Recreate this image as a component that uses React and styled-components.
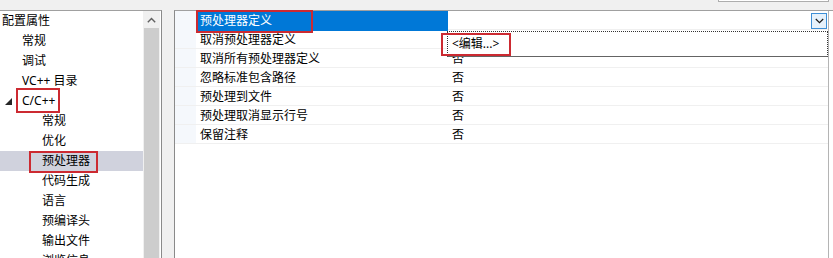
import React from "react";
import styled, { createGlobalStyle } from "styled-components";

const GlobalStyle = createGlobalStyle`
  html, body { margin: 0; padding: 0; }
  body {
    background: #f0f0f0;
    font-family: "Noto Sans", "Noto Sans CJK SC", sans-serif;
    font-size: 12px;
    color: #000;
  }
  * { box-sizing: border-box; }
`;

const Page = styled.div`
  width: 833px;
  height: 258px;
  overflow: hidden;
  display: flex;
  flex-direction: column;
  background: #f0f0f0;
`;

const TopStrip = styled.div`
  height: 10px;
  flex: none;
  display: flex;
  justify-content: flex-end;
  align-items: flex-start;
`;

const SearchBox = styled.div`
  width: 111px;
  height: 2px;
  margin-right: 4px;
  background: #fff;
  border: 1px solid #adadad;
  border-top: none;
`;

const Main = styled.div`
  flex: 1;
  display: flex;
  gap: 12px;
  min-height: 0;
`;

const TreePanel = styled.div`
  width: 162px;
  flex: none;
  display: flex;
  border-top: 1px solid #a0a0a0;
  border-right: 1px solid #8a8a8a;
  background: #fff;
`;

const TreeList = styled.div`
  width: 143px;
  flex: none;
  display: flex;
  flex-direction: column;
`;

const TreeRow = styled.div`
  height: 20px;
  flex: none;
  display: flex;
  align-items: center;
  padding-left: ${(p) => 2 + p.$level * 20}px;
  background: ${(p) => (p.$selected ? "#d0d2dd" : "transparent")};
  white-space: nowrap;
`;

const Expander = styled.span`
  width: 0;
  height: 0;
  margin-left: -17px;
  margin-right: 10px;
  border-style: solid;
  border-width: 0 0 7px 7px;
  border-color: transparent transparent #262626 transparent;
`;

const Label = styled.span`
  position: relative;
  line-height: 20px;
`;

const Callout = styled.span`
  position: absolute;
  top: ${(p) => p.$t}px;
  bottom: ${(p) => p.$b}px;
  left: ${(p) => p.$l}px;
  right: ${(p) => p.$r}px;
  border: 2px solid #cc2a31;
  pointer-events: none;
`;

const Scrollbar = styled.div`
  width: 17px;
  flex: none;
  margin-right: 1px;
  background: #f0f0f0;
  display: flex;
  flex-direction: column;
`;

const ScrollArrow = styled.div`
  height: 17px;
  flex: none;
  display: flex;
  align-items: center;
  justify-content: center;
`;

const ScrollThumb = styled.div`
  flex: 1;
  margin: 0 1px;
  background: #cdcdcd;
`;

const RightPanel = styled.div`
  flex: 1;
  position: relative;
  border-top: 1px solid #a0a0a0;
  border-left: 1px solid #8a8a8a;
  background: #fff;
`;

const Grid = styled.div`
  width: 654px;
  height: 100%;
  border-right: 1px solid #b4b4b4;
  display: flex;
  flex-direction: column;
`;

const PropRow = styled.div`
  height: 19px;
  flex: none;
  display: grid;
  grid-template-columns: 21px 252px 380px;
  border-bottom: 1px solid #f0f0f0;
`;

const Margin = styled.div`
  background: #f5f8fc;
`;

const NameCell = styled.div`
  position: relative;
  display: flex;
  align-items: center;
  padding-left: 4px;
  white-space: nowrap;
  background: ${(p) => (p.$selected ? "#0078d7" : "transparent")};
  color: ${(p) => (p.$selected ? "#fff" : "#000")};
`;

const ValueCell = styled.div`
  display: flex;
  align-items: center;
  justify-content: space-between;
  padding-left: 4px;
  padding-right: 1px;
`;

const DropButton = styled.div`
  width: 16px;
  height: 16px;
  border: 1px solid #3c8ed6;
  background: #e5f1fb;
  display: flex;
  align-items: center;
  justify-content: center;
`;

const Popup = styled.div`
  position: absolute;
  left: 272px;
  top: 20px;
  width: 381px;
  height: 26px;
  background: #fff;
  border-top: 1px dotted #333;
  border-right: 1px dotted #333;
  border-left: 1px dotted #333;
  border-bottom: 1px solid #646464;
  display: flex;
  align-items: center;
  padding-left: 4px;
`;

const rows = [
  "取消预处理器定义",
  "取消所有预处理器定义",
  "忽略标准包含路径",
  "预处理到文件",
  "预处理取消显示行号",
  "保留注释",
];

const tree = [
  { label: "配置属性", level: 0 },
  { label: "常规", level: 1 },
  { label: "调试", level: 1 },
  { label: "VC++ 目录", level: 1 },
  { label: "C/C++", level: 1, expanded: true, callout: { t: -3, b: -2, l: -6, r: -5 } },
  { label: "常规", level: 2 },
  { label: "优化", level: 2 },
  { label: "预处理器", level: 2, selected: true, callout: { t: 0, b: -2, l: -13, r: -8 } },
  { label: "代码生成", level: 2 },
  { label: "语言", level: 2 },
  { label: "预编译头", level: 2 },
  { label: "输出文件", level: 2 },
  { label: "浏览信息", level: 2 },
];

export default function App() {
  return (
    <Page>
      <GlobalStyle />
      <TopStrip>
        <SearchBox />
      </TopStrip>
      <Main>
        <TreePanel>
          <TreeList>
            {tree.map((t, i) => (
              <TreeRow key={i} $level={t.level} $selected={t.selected}>
                {t.expanded && <Expander />}
                <Label>
                  {t.label}
                  {t.callout && <Callout $t={t.callout.t} $b={t.callout.b} $l={t.callout.l} $r={t.callout.r} />}
                </Label>
              </TreeRow>
            ))}
          </TreeList>
          <Scrollbar>
            <ScrollArrow>
              <svg width="9" height="6" viewBox="0 0 9 6">
                <path d="M0.8 5.2 L4.5 1.5 L8.2 5.2" fill="none" stroke="#606060" strokeWidth="1.4" />
              </svg>
            </ScrollArrow>
            <ScrollThumb />
          </Scrollbar>
        </TreePanel>
        <RightPanel>
          <Grid>
            <PropRow>
              <Margin />
              <NameCell $selected>
                <Label>
                  预处理器定义
                  <Callout $t={-1} $b={-2} $l={-4} $r={-41} />
                </Label>
              </NameCell>
              <ValueCell>
                <span />
                <DropButton>
                  <svg width="9" height="6" viewBox="0 0 9 6">
                    <path d="M0.8 1 L4.5 4.7 L8.2 1" fill="none" stroke="#1a1a1a" strokeWidth="1.2" />
                  </svg>
                </DropButton>
              </ValueCell>
            </PropRow>
            {rows.map((r, i) => (
              <PropRow key={i}>
                <Margin />
                <NameCell>{r}</NameCell>
                <ValueCell>否</ValueCell>
              </PropRow>
            ))}
          </Grid>
          <Popup>
            <Label>
              &lt;编辑...&gt;
              <Callout $t={-1} $b={-2} $l={-11} $r={-12} />
            </Label>
          </Popup>
        </RightPanel>
      </Main>
    </Page>
  );
}
